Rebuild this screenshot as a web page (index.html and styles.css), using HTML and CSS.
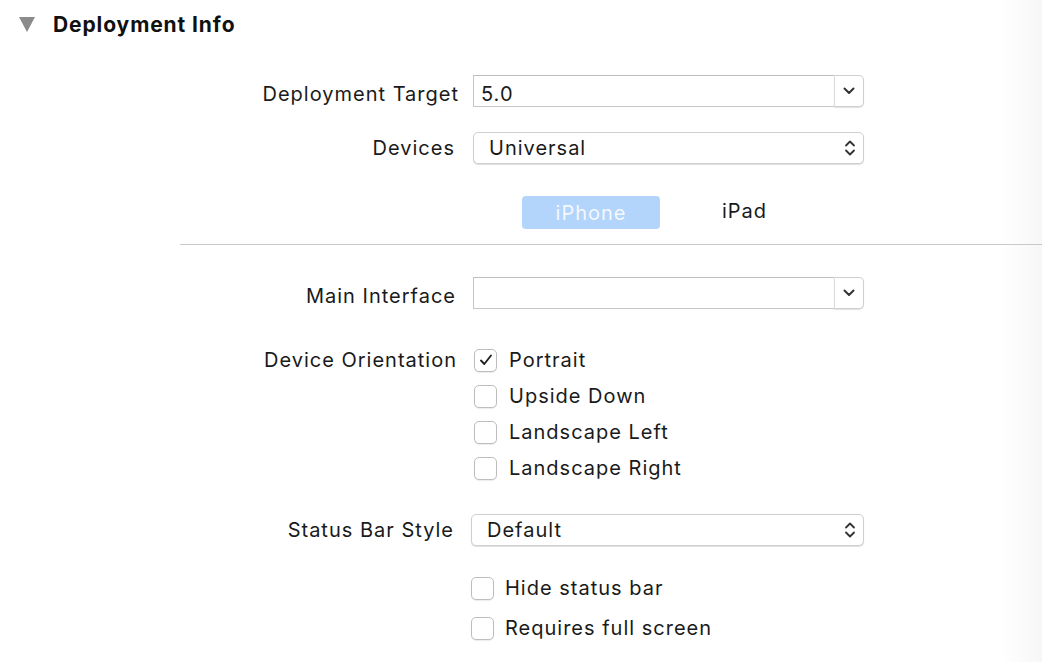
FILE: index.html
```html
<!DOCTYPE html>
<html>
<head>
<meta charset="utf-8">
<link rel="stylesheet" href="styles.css">
</head>
<body>
<div class="page">
  <div class="header">
    <span class="disclosure"></span>
    <span class="title">Deployment Info</span>
  </div>

  <div class="row row-target">
    <div class="label label-combo">Deployment Target</div>
    <div class="combo">
      <div class="combo-field">5.0</div>
      <div class="combo-btn">
        <svg width="12" height="8" viewBox="0 0 12 8"><path d="M1.5 1.5 L6 6 L10.5 1.5" fill="none" stroke="#333" stroke-width="2" stroke-linecap="round" stroke-linejoin="round"/></svg>
      </div>
    </div>
  </div>

  <div class="row row-devices">
    <div class="label label-devices">Devices</div>
    <div class="popup">
      <span class="popup-text">Universal</span>
      <svg class="updown" width="12" height="18" viewBox="0 0 12 18"><path d="M2 6.5 L6 2.5 L10 6.5 M2 11.5 L6 15.5 L10 11.5" fill="none" stroke="#333" stroke-width="1.8" stroke-linecap="round" stroke-linejoin="round"/></svg>
    </div>
  </div>

  <div class="segments">
    <div class="seg seg-on">iPhone</div>
    <div class="seg">iPad</div>
  </div>

  <div class="sep"></div>

  <div class="row row-main">
    <div class="label label-combo label-main">Main Interface</div>
    <div class="combo">
      <div class="combo-field"></div>
      <div class="combo-btn">
        <svg width="12" height="8" viewBox="0 0 12 8"><path d="M1.5 1.5 L6 6 L10.5 1.5" fill="none" stroke="#333" stroke-width="2" stroke-linecap="round" stroke-linejoin="round"/></svg>
      </div>
    </div>
  </div>

  <div class="orient">
    <div class="row check-row">
      <div class="label">Device Orientation</div>
      <span class="box"><svg width="14" height="12" viewBox="0 0 14 12"><path d="M2 6.5 L5.3 10 L12 1.5" fill="none" stroke="#222" stroke-width="1.9" stroke-linecap="round" stroke-linejoin="round"/></svg></span>
      <span class="check-text">Portrait</span>
    </div>
    <div class="row check-row">
      <div class="label"></div>
      <span class="box"></span>
      <span class="check-text">Upside Down</span>
    </div>
    <div class="row check-row">
      <div class="label"></div>
      <span class="box"></span>
      <span class="check-text">Landscape Left</span>
    </div>
    <div class="row check-row">
      <div class="label"></div>
      <span class="box"></span>
      <span class="check-text">Landscape Right</span>
    </div>
  </div>

  <div class="row row-status">
    <div class="label label-status">Status Bar Style</div>
    <div class="popup popup-status">
      <span class="popup-text">Default</span>
      <svg class="updown" width="12" height="18" viewBox="0 0 12 18"><path d="M2 6.5 L6 2.5 L10 6.5 M2 11.5 L6 15.5 L10 11.5" fill="none" stroke="#333" stroke-width="1.8" stroke-linecap="round" stroke-linejoin="round"/></svg>
    </div>
  </div>

  <div class="status-checks">
    <div class="row check-row2">
      <div class="label"></div>
      <span class="box"></span>
      <span class="check-text text2">Hide status bar</span>
    </div>
    <div class="row check-row2">
      <div class="label"></div>
      <span class="box"></span>
      <span class="check-text text2">Requires full screen</span>
    </div>
  </div>
</div>
</body>
</html>
```

FILE: styles.css
```css
html, body {
  margin: 0;
  padding: 0;
}
body {
  width: 1042px;
  height: 662px;
  overflow: hidden;
  background: linear-gradient(to right, #ffffff 0, #ffffff 1000px, #f7f7f7 1042px);
  font-family: Inter, "Liberation Sans", sans-serif;
  color: #1a1a1a;
  font-size: 20px;
  letter-spacing: 1px;
}
.page {
  height: 662px;
}
.header {
  display: flex;
  align-items: center;
  height: 24px;
  padding-top: 12px;
}
.disclosure {
  width: 0;
  height: 0;
  margin-left: 19px;
  border-left: 8px solid transparent;
  border-right: 8px solid transparent;
  border-top: 15px solid #8b8b8b;
}
.title {
  margin-left: 18px;
  font-weight: 700;
  font-size: 21px;
  letter-spacing: 0.9px;
  color: #111;
}
.row {
  display: flex;
  align-items: center;
}
.label {
  width: 459px;
  text-align: right;
  flex: none;
  white-space: nowrap;
}
.label-combo {
  padding-top: 6px;
}
.row-target {
  margin-top: 39px;
  height: 32px;
}
.row-target .combo {
  margin-left: 14px;
}
.combo {
  display: flex;
  width: 391px;
  height: 32px;
}
.combo-field {
  flex: 1;
  border: 1px solid #c6c6c6;
  border-top-color: #bdbdbd;
  border-right: none;
  background: #fff;
  padding-left: 7px;
  padding-top: 5px;
  display: flex;
  align-items: center;
  box-sizing: border-box;
}
.combo-btn {
  width: 30px;
  box-sizing: border-box;
  border: 1px solid #cfcfcf;
  border-left: 1px solid #dcdcdc;
  border-radius: 0 5px 5px 0;
  box-shadow: 0 1px 1px rgba(0,0,0,0.12);
  display: flex;
  align-items: center;
  justify-content: center;
  background: #fff;
}
.row-devices {
  margin-top: 25px;
  height: 32px;
}
.label-devices {
  width: 455px;
}
.row-devices .popup {
  margin-left: 18px;
}
.popup {
  width: 391px;
  height: 32px;
  box-sizing: border-box;
  border: 1px solid #cfcfcf;
  border-radius: 5px;
  box-shadow: 0 1px 1px rgba(0,0,0,0.13);
  display: flex;
  align-items: center;
  justify-content: space-between;
  padding-left: 15px;
  padding-right: 7px;
  background: #fff;
}
.segments {
  display: flex;
  align-items: center;
  margin-top: 32px;
  margin-left: 522px;
  height: 33px;
}
.seg {
  font-size: 20px;
  display: flex;
  align-items: center;
  justify-content: center;
  height: 33px;
}
.seg-on {
  width: 138px;
  background: #b3d4fb;
  color: #f4f8ff;
  border-radius: 4px;
}
.seg-on + .seg {
  margin-left: 62px;
  color: #1a1a1a;
  padding-bottom: 4px;
  box-sizing: border-box;
}
.sep {
  margin-top: 15px;
  margin-left: 180px;
  height: 1px;
  background: #c9c9c9;
}
.row-main {
  margin-top: 32px;
  height: 32px;
}
.label-main {
  width: 456px;
}
.row-main .combo {
  margin-left: 17px;
}
.orient {
  margin-top: 33px;
}
.check-row {
  height: 36px;
}
.check-row .label {
  width: 457px;
}
.box {
  flex: none;
  width: 23px;
  height: 23px;
  box-sizing: border-box;
  border: 1px solid #bdbdbd;
  border-radius: 5px;
  background: #fff;
  box-shadow: 0 1px 1px rgba(0,0,0,0.08);
  display: flex;
  align-items: center;
  justify-content: center;
}
.check-row .box {
  margin-left: 17px;
}
.check-text {
  margin-left: 12px;
}
.row-status {
  margin-top: 28px;
  height: 32px;
}
.label-status {
  width: 454px;
}
.popup-status {
  margin-left: 17px;
  width: 393px;
}
.status-checks {
  margin-top: 22px;
}
.check-row2 {
  height: 40px;
}
.check-row2 .label {
  width: 471px;
}
.text2 {
  margin-left: 11px;
}
```
